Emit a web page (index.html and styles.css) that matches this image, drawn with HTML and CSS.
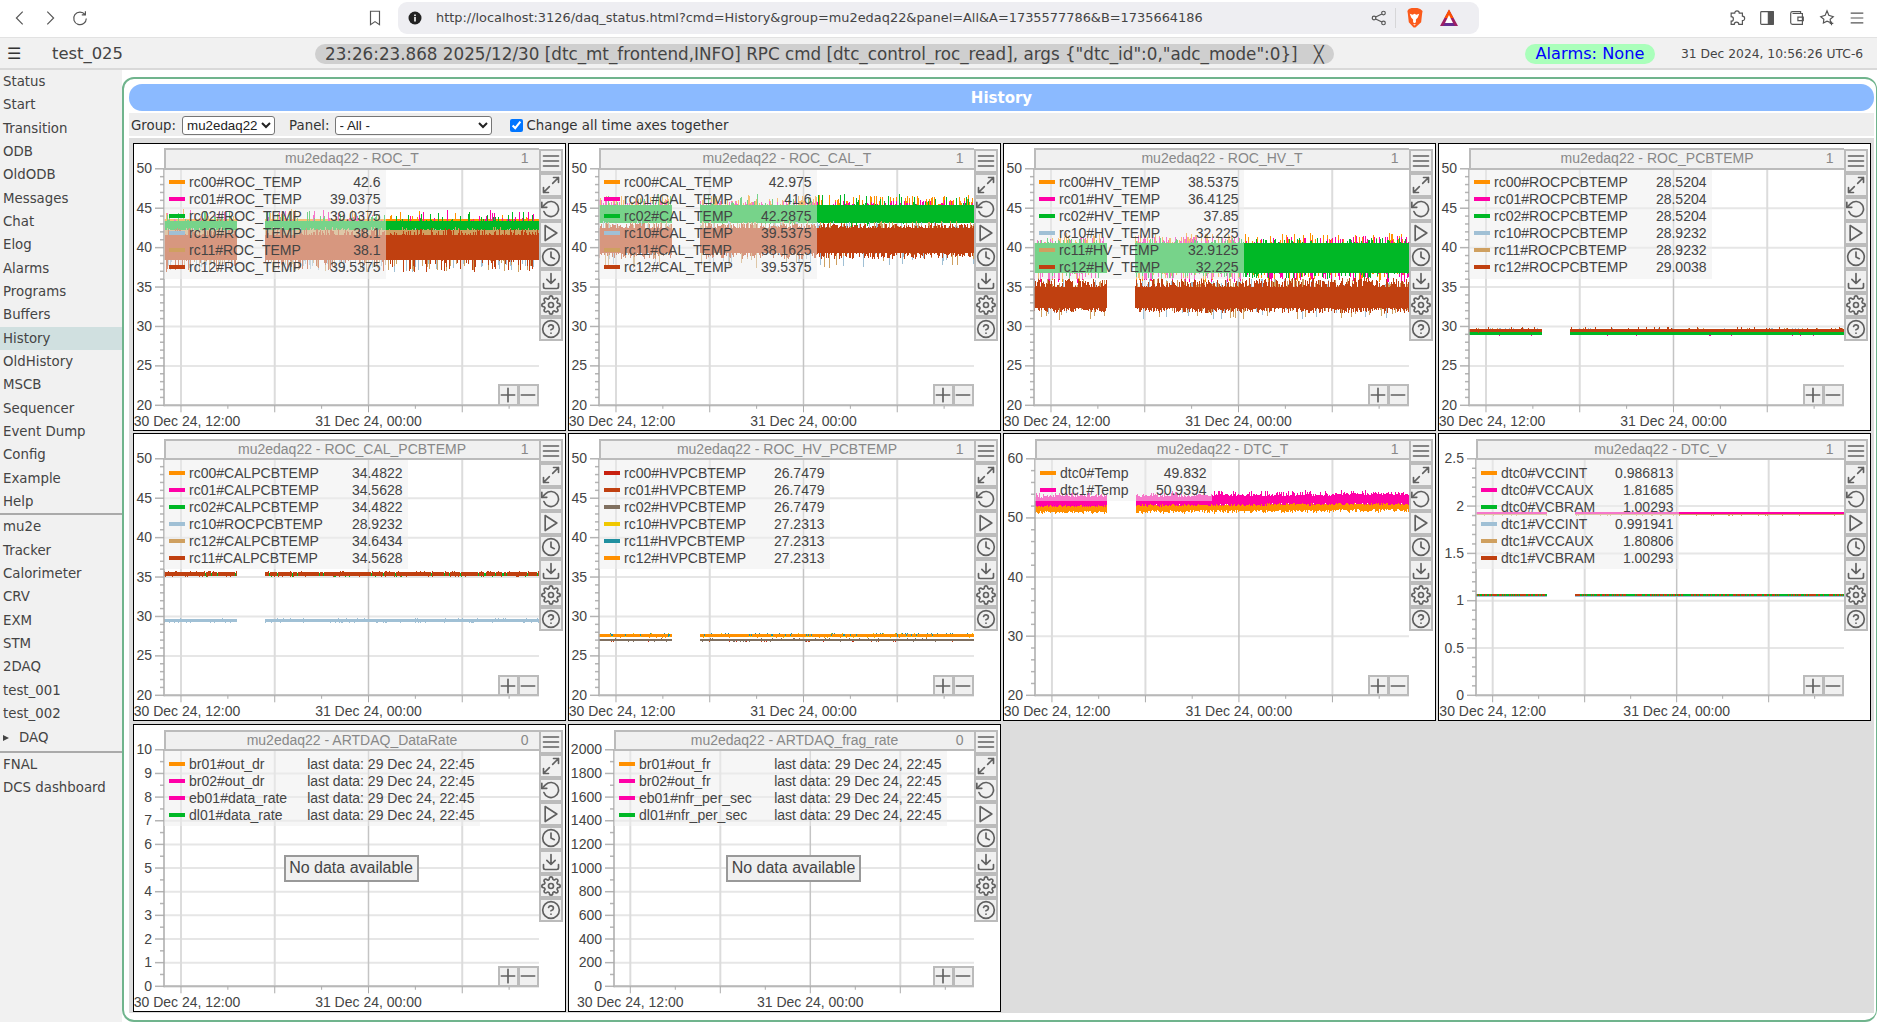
FILE: index.html
```html
<!DOCTYPE html>
<html lang="en">
<head>
<meta charset="utf-8">
<title>History</title>
<link rel="stylesheet" href="styles.css">
</head>
<body>
<div class="browser">
  <div class="nav">
    <svg class="bicon" viewBox="0 0 20 20"><path d="M13 3 6 10l7 7"/></svg>
    <svg class="bicon" viewBox="0 0 20 20"><path d="M7 3l7 7-7 7"/></svg>
    <svg class="bicon" viewBox="0 0 20 20"><path d="M15.600 6.200A7 7 0 1 0 17 10.500M16 2.500v4h-4"/></svg>
  </div>
  <svg class="bicon bookmark" viewBox="0 0 20 20"><path d="M5 2.500h10v15l-5-3.500-5 3.500z"/></svg>
  <div class="urlbar">
    <svg class="info" viewBox="0 0 16 16"><circle cx="8" cy="8" r="6.500" fill="#222"/><rect x="7.200" y="7" width="1.600" height="4.500" fill="#fff"/><rect x="7.200" y="4.500" width="1.600" height="1.600" fill="#fff"/></svg>
    <span class="url">http://localhost:3126/daq_status.html?cmd=History&amp;group=mu2edaq22&amp;panel=All&amp;A=1735577786&amp;B=1735664186</span>
    <svg class="bicon share" viewBox="0 0 20 20"><circle cx="15" cy="4.500" r="2"/><circle cx="15" cy="15.500" r="2"/><circle cx="4.500" cy="10" r="2"/><path d="M6.300 9 13.200 5.500M6.300 11l6.900 3.500"/></svg>
    <span class="urlsep"></span>
    <svg class="lion" viewBox="0 0 20 22"><path d="M4 1.500 7 .5h6l3 1 2.500 2-.5 3-1 9-6 5.500h-2L4 15.500l-1-9-.5-3z" fill="#fb5a1b"/><path d="M5 6.500 8 7.500l2-1 2 1 3-1-1.500 4-2 2v3l-1.500 1-1.500-1v-3l-2-2z" fill="#fff"/><path d="M8.500 17.500h3l-1.500 1.500z" fill="#fff"/></svg>
    <svg class="bat" viewBox="0 0 20 20"><polygon points="10,1.500 19,18 1,18" fill="#9e1f63"/><polygon points="10,1.500 14.500,10 5.500,10" fill="#ff5000"/><polygon points="10,7 14,15 6,15" fill="#fff"/><polygon points="6,15 14,15 16,18 4,18" fill="#662d91"/></svg>
  </div>
  <div class="tools">
    <svg class="bicon" viewBox="0 0 20 20"><path d="M7.500 4.500a2.500 2.500 0 0 1 5 0H16v3.500a2.500 2.500 0 0 1 0 5V17H12a2.500 2.500 0 0 0-5 0H3.500v-3.500a2.500 2.500 0 0 0 0-5V4.500z"/></svg>
    <svg class="bicon" viewBox="0 0 20 20"><rect x="3" y="3" width="14" height="14" rx="1"/><rect x="11.500" y="3" width="5.500" height="14" fill="#555"/></svg>
    <svg class="bicon" viewBox="0 0 20 20"><path d="M3 5a2 2 0 0 1 2-2h9v2M3 5v10a2 2 0 0 0 2 2h11V5H5M11 9h6v4h-6z"/></svg>
    <svg class="bicon" viewBox="0 0 20 20"><path d="M10 2l2 5 5 1.500-3.500 3 .5 3.500-4-1.500-4 2 .5-4-3.500-3L8 7zM15 14v4M13 16h4"/></svg>
    <svg class="bicon" viewBox="0 0 20 20"><path d="M3 4.500h14M3 10h14M3 15.500h14"/></svg>
  </div>
</div>

<header class="topbar">
  <span class="burger">☰</span>
  <span class="expt">test_025</span>
  <div class="msg">
    <span class="msgtext">23:26:23.868 2025/12/30 [dtc_mt_frontend,INFO] RPC cmd [dtc_control_roc_read], args {"dtc_id":0,"adc_mode":0}]</span>
    <span class="msgx">╳</span>
  </div>
  <div class="alarm">Alarms: None</div>
  <div class="clock">31 Dec 2024, 10:56:26 UTC-6</div>
</header>

<div class="layout">
  <nav class="side">
    <a class="item">Status</a>
    <a class="item">Start</a>
    <a class="item">Transition</a>
    <a class="item">ODB</a>
    <a class="item">OldODB</a>
    <a class="item">Messages</a>
    <a class="item">Chat</a>
    <a class="item">Elog</a>
    <a class="item">Alarms</a>
    <a class="item">Programs</a>
    <a class="item">Buffers</a>
    <a class="item active">History</a>
    <a class="item">OldHistory</a>
    <a class="item">MSCB</a>
    <a class="item">Sequencer</a>
    <a class="item">Event Dump</a>
    <a class="item">Config</a>
    <a class="item">Example</a>
    <a class="item">Help</a>
    <hr class="rule">
    <a class="item">mu2e</a>
    <a class="item">Tracker</a>
    <a class="item">Calorimeter</a>
    <a class="item">CRV</a>
    <a class="item">EXM</a>
    <a class="item">STM</a>
    <a class="item">2DAQ</a>
    <a class="item">test_001</a>
    <a class="item">test_002</a>
    <a class="item folder"><span class="tri"></span>DAQ</a>
    <hr class="rule rule2">
    <a class="item">FNAL</a>
    <a class="item">DCS dashboard</a>
  </nav>
  <main class="content">
    <section class="box">
      <div class="title">History</div>
      <div class="controls">
        <label class="ctl">Group:</label>
        <select class="sel selgroup"><option>mu2edaq22</option></select>
        <label class="ctl ctlpanel">Panel:</label>
        <select class="sel selpanel"><option>- All -</option></select>
        <input class="chk" type="checkbox" checked>
        <span class="ctl">Change all time axes together</span>
      </div>
      <div class="grid" id="grid"></div>
    </section>
  </main>
</div>
<script src="script.js"></script>
</body>
</html>
```

FILE: styles.css
```css
* { box-sizing: border-box; }
html, body { margin: 0; height: 100%; overflow: hidden; }
body { width: 1877px; height: 1022px; background: #fff; color: #444; font-family: "DejaVu Sans", sans-serif; font-size: 13.33px; display: flex; flex-direction: column; }

.browser { height: 38px; flex: none; display: flex; align-items: center; background: #fff; border-bottom: 1px solid #e2e2e2; padding: 0 0 2px 0; }
.nav { display: flex; gap: 12px; padding-left: 11px; width: 366px; }
.bicon { width: 18px; height: 18px; fill: none; stroke: #555; stroke-width: 1.300; display: block; flex: none; }
.bookmark { margin-right: 14px; }
.urlbar { width: 1081px; height: 32px; background: #eeeef2; border-radius: 9px; display: flex; align-items: center; padding: 0 0 0 9px; }
.info { width: 16px; height: 16px; flex: none; }
.url { margin-left: 13px; width: 931px; font-size: 12.920px; color: #444; white-space: nowrap; }
.share { margin-left: 3px; }
.urlsep { width: 1px; height: 20px; background: #d6d6d8; margin: 0 9px 0 7px; }
.lion { width: 19px; height: 22px; flex: none; }
.bat { width: 20px; height: 20px; margin-left: 15px; flex: none; }
.tools { display: flex; gap: 12px; margin-left: 249px; }

.topbar { height: 32px; flex: none; background: #f1f1f1; border-bottom: 2px solid #d9d9d9; display: flex; align-items: center; padding-top: 2px; }
.burger { width: 52px; padding-left: 7px; padding-bottom: 2px; font-size: 16px; color: #333; }
.expt { width: 263px; padding-bottom: 2px; font-size: 16.400px; color: #444; }
.msg { width: 1019px; height: 20px; background: #cfcfcf; border-radius: 10px; display: flex; align-items: center; padding-left: 10px; font-size: 16.750px; color: #444; white-space: nowrap; }
.msgtext { width: 989px; }
.msgx { font-size: 16px; }
.alarm { margin-left: 191px; width: 130px; height: 20px; background: #aaffbb; border-radius: 10px; color: #0000ff; font-size: 16.200px; text-align: center; line-height: 20px; }
.clock { margin-left: 26px; font-size: 12.300px; color: #444; white-space: nowrap; }

.layout { flex: 1; display: flex; min-height: 0; }
.side { width: 122px; flex: none; background: #f1f1f1; }
.item { display: block; height: 23.330px; line-height: 23.330px; padding-left: 3px; color: #444; white-space: nowrap; }
.active { background: #d0e0e0; }
.folder { display: flex; align-items: center; margin-top: 1px; }
.tri { width: 0; height: 0; border-left: 6px solid #444; border-top: 3.500px solid transparent; border-bottom: 3.500px solid transparent; margin-right: 10px; }
.rule { margin: 0; height: 2px; border: 0; background: #aaa; }
.rule2 { margin-top: 1px; }

.content { flex: 1; min-width: 0; padding-top: 7px; }
.box { height: 945px; border: 2px solid #70b48d; border-right-width: 1px; border-radius: 12px; padding: 5px 2px 0 5px; }
.title { height: 27px; line-height: 28px; background: #8bbaff; border-radius: 13px; color: #fff; font-weight: bold; font-size: 15px; text-align: center; }
.controls { height: 23px; margin-top: 2px; background: #eee; display: flex; align-items: center; padding: 2px 0 0 2px; }
.ctl { font-size: 13.330px; color: #333; white-space: nowrap; }
.sel { height: 19px; font-family: "Liberation Sans", sans-serif; font-size: 13.330px; color: #222; background: #fff; border: 1px solid #767676; border-radius: 3px; padding: 0; margin: 0; }
.selgroup { width: 93px; margin-left: 6px; }
.ctlpanel { margin-left: 14px; }
.selpanel { width: 157px; margin-left: 5px; }
.chk { width: 13px; height: 13px; margin: 0 4px 0 18px; }

.grid { margin-top: 2px; height: 875px; background: #ddd; padding: 4.500px 0 0 3.500px; display: grid; grid-template-columns: repeat(4, 433px); grid-auto-rows: 288px; gap: 2.800px 2px; align-content: start; }
.panel { position: relative; background: #fff; box-shadow: inset 0 0 0 1px #000; overflow: hidden; font-family: "Liberation Sans", sans-serif; font-size: 14px; }
.plot { position: absolute; left: 0; top: 0; width: 433px; height: 288px; }
.lbl { font-family: "Liberation Sans", sans-serif; font-size: 14px; fill: #444; }
.end { text-anchor: end; }
.mid { text-anchor: middle; }

.phead { position: absolute; top: 5.500px; right: 27px; height: 21.500px; background: #f0f0f0; border: 2px solid #bbb; border-right: 0; color: #888; text-align: center; line-height: 17.500px; }
.pnum { position: absolute; right: 10px; top: 0; }

.legend { position: absolute; top: 27px; padding: 4px 5px 3px 5px; background: rgba(238, 238, 238, 0.5); }
.lrow { display: flex; align-items: center; height: 17px; color: #444; white-space: nowrap; }
.swatch { width: 16px; height: 4px; margin-right: 4.500px; flex: none; }
.lname { flex: 1; }

.toolbar { position: absolute; left: 406px; top: 6px; width: 24px; display: flex; flex-direction: column; }
.tbtn { width: 24px; height: 24px; background: #f0f0f0; border: 2px solid #bbb; display: flex; align-items: center; justify-content: center; }
.ticon { width: 20px; height: 20px; flex: none; fill: none; stroke: #606060; stroke-width: 2; stroke-linecap: round; stroke-linejoin: round; }

.zoom { position: absolute; left: 365px; top: 241.500px; display: flex; }
.zbtn { width: 21px; height: 21.500px; background: #f0f0f0; border: 2px solid #bbb; display: flex; align-items: center; justify-content: center; }
.zbtn + .zbtn { margin-left: -1px; }

.nodata { position: absolute; top: 131px; width: 135px; height: 27px; background: #f0f0f0; border: 2px solid #999; font-size: 16px; color: #444; text-align: center; line-height: 22px; }
```

FILE: script.js
```js
var C = { o: '#ff9000', p: '#ff00a7', g: '#00b826', b: '#a0c0d5', t: '#cfa060', r: '#c04010', dr: '#c8200f', br: '#807060', y: '#f0c800', te: '#2090a0' };
var ICONS = {
  menu: '<path d="M3 6h18M3 12h18M3 18h18"/>',
  expand: '<path d="M15 3h6v6M9 21H3v-6M21 3l-7 7M3 21l7-7"/>',
  undo: '<path d="M1 4v6h6"/><path d="M3.510 15a9 9 0 1 0 2.130-9.360L1 10"/>',
  play: '<path d="M5 3l14 9-14 9z"/>',
  clock: '<circle cx="12" cy="12" r="10"/><path d="M12 6v6l4 2"/>',
  down: '<path d="M21 15v4a2 2 0 0 1-2 2H5a2 2 0 0 1-2-2v-4"/><path d="M7 10l5 5 5-5M12 15V3"/>',
  gear: '<circle cx="12" cy="12" r="3"/><path d="M19.400 15a1.650 1.650 0 0 0 .33 1.820l.06.06a2 2 0 0 1 0 2.830 2 2 0 0 1-2.830 0l-.06-.06a1.650 1.650 0 0 0-1.820-.33 1.650 1.650 0 0 0-1 1.510V21a2 2 0 0 1-2 2 2 2 0 0 1-2-2v-.09A1.650 1.650 0 0 0 9 19.400a1.650 1.650 0 0 0-1.820.33l-.06.06a2 2 0 0 1-2.830 0 2 2 0 0 1 0-2.830l.06-.06a1.650 1.650 0 0 0 .33-1.820 1.650 1.650 0 0 0-1.510-1H3a2 2 0 0 1-2-2 2 2 0 0 1 2-2h.09A1.650 1.650 0 0 0 4.600 9a1.650 1.650 0 0 0-.33-1.820l-.06-.06a2 2 0 0 1 0-2.830 2 2 0 0 1 2.830 0l.06.06a1.650 1.650 0 0 0 1.820.33H9a1.650 1.650 0 0 0 1-1.510V3a2 2 0 0 1 2-2 2 2 0 0 1 2 2v.09a1.650 1.650 0 0 0 1 1.510 1.650 1.650 0 0 0 1.820-.33l.06-.06a2 2 0 0 1 2.830 0 2 2 0 0 1 0 2.830l-.06.06a1.650 1.650 0 0 0-.33 1.820V9a1.650 1.650 0 0 0 1.510 1H21a2 2 0 0 1 2 2 2 2 0 0 1-2 2h-.09a1.650 1.650 0 0 0-1.510 1z"/>',
  help: '<circle cx="12" cy="12" r="10"/><path d="M9.090 9a3 3 0 0 1 5.830 1c0 2-3 3-3 3M12 17h.01"/>',
  plus: '<path d="M4 12h16M12 4v16"/>',
  minus: '<path d="M4 12h16"/>'
};
function icon(n) { return '<svg class="ticon" viewBox="0 0 24 24">' + ICONS[n] + '</svg>'; }

var ROC = ['rc00', 'rc01', 'rc02', 'rc10', 'rc11', 'rc12'];
var SIX = ['o', 'p', 'g', 'b', 't', 'r'];
function rows(names, suffix, vals, cols) {
  return names.map(function (n, i) { return [(cols || SIX)[i], n + suffix, vals[i]]; });
}
var LAST = 'last data: 29 Dec 24, 22:45';

/* band: colour, top, bottom, spike-up-to, up probability, spike-down-to, down probability, jitter, drift, skip probability */
var PANELS = [
  { t: 'ROC_T', n: 1, x0: 31, ax: [20, 50, 5, 1], lw: 222,
    rows: rows(ROC, '#ROC_TEMP', ['42.6', '39.0375', '39.0375', '38.1', '38.1', '39.5375']),
    bands: [['o', 76, 92, 66, .12, 92, 0], ['p', 78, 92, 67, .14, 92, 0], ['g', 78, 92, 68, .18, 97, .05],
      ['b', 92, 117, 85, .2, 129, .2], ['t', 87, 117, 84, .2, 129, .2], ['r', 92, 117, 85, .55, 129, .25]] },
  { t: 'ROC_CAL_T', n: 1, x0: 31, ax: [20, 50, 5, 1], lw: 218,
    rows: rows(ROC, '#CAL_TEMP', ['42.975', '41.6', '42.2875', '39.5375', '38.1625', '39.5375']),
    bands: [['o', 62, 80, 52, .4, 80, 0], ['p', 62, 80, 57, .35, 80, 0], ['g', 62, 80, 50, .15, 86, .06],
      ['b', 85, 110, 78, .25, 124, .1], ['t', 85, 110, 78, .35, 126, .1], ['r', 85, 110, 80, .75, 116, .6]] },
  { t: 'ROC_HV_T', n: 1, x0: 31, ax: [20, 50, 5, 1], lw: 210,
    rows: rows(ROC, '#HV_TEMP', ['38.5375', '36.4125', '37.85', '32.225', '32.9125', '32.225']),
    bands: [['o', 100, 130, 90, .28, 139, .2], ['p', 100, 130, 93, .35, 140, .28], ['g', 100, 130, 95, .28, 136, .18],
      ['b', 146, 165, 136, .3, 177, .1], ['t', 146, 165, 136, .35, 177, .1], ['r', 144, 165, 135, .8, 170, .85]] },
  { t: 'ROC_PCBTEMP', n: 1, x0: 31, ax: [20, 50, 5, 1], lw: 243,
    rows: rows(ROC, '#ROCPCBTEMP', ['28.5204', '28.5204', '28.5204', '28.9232', '28.9232', '29.0038']),
    bands: [['p', 189, 191, 189, 0, 193, .08, 0], ['g', 189, 192, 189, 0, 192, 0, 0], ['b', 186, 188, 185, .1, 189, .05, 0],
      ['t', 186, 188, 185, .1, 189, .05, 0], ['r', 185.500, 188.500, 183.500, .12, 189.500, .12, 0]] },
  { t: 'ROC_CAL_PCBTEMP', n: 1, x0: 31, ax: [20, 50, 5, 1], lw: 244,
    rows: [['o', 'rc00#CALPCBTEMP', '34.4822'], ['p', 'rc01#CALPCBTEMP', '34.5628'], ['g', 'rc02#CALPCBTEMP', '34.4822'],
      ['b', 'rc10#ROCPCBTEMP', '28.9232'], ['t', 'rc12#CALPCBTEMP', '34.6434'], ['r', 'rc11#CALPCBTEMP', '34.5628']],
    bands: [['g', 140, 143, 140, 0, 144, .1, 0], ['b', 186, 189, 185, .2, 190, .2, 0], ['r', 139, 143, 137.500, .2, 144, .2, 0, 0, .06]] },
  { t: 'ROC_HV_PCBTEMP', n: 1, x0: 31, ax: [20, 50, 5, 1], lw: 231,
    rows: rows(ROC, '#HVPCBTEMP', ['26.7479', '26.7479', '26.7479', '27.2313', '27.2313', '27.2313'], ['dr', 'r', 'br', 'y', 'te', 'o']),
    bands: [['dr', 206, 208, 206, 0, 209, .06, 0], ['r', 206, 208, 206, 0, 209, .06, 0], ['br', 206, 208, 205, .08, 209, .06, 0],
      ['y', 201, 204, 200, .1, 205, .05, 0], ['te', 200.500, 203, 200, .1, 204, .05, 0], ['o', 201, 204, 200.500, .1, 205, .1, 0, 0, .08]] },
  { t: 'DTC_T', n: 1, x0: 32, ax: [20, 60, 10, 2], lw: 177,
    rows: rows(['dtc0', 'dtc1'], '#Temp', ['49.832', '50.9394'], ['o', 'p']),
    bands: [['o', 71.500, 79, 68, .1, 81.500, .4, 1, -2], ['p', 63.500, 73, 59, .35, 74.500, .2, 1, -2.500]] },
  { t: 'DTC_V', n: 1, x0: 38, ax: [0, 2.500, .5, .1], lw: 203,
    rows: [['o', 'dtc0#VCCINT', '0.986813'], ['p', 'dtc0#VCCAUX', '1.81685'], ['g', 'dtc0#VCBRAM', '1.00293'],
      ['b', 'dtc1#VCCINT', '0.991941'], ['t', 'dtc1#VCCAUX', '1.80806'], ['r', 'dtc1#VCBRAM', '1.00293']],
    bands: [['t', 80.500, 82, 80.500, 0, 83, .2, 0], ['p', 79, 81, 79, 0, 81, 0, 0], ['b', 162, 164, 162, 0, 164, 0, 0],
      ['r', 161, 163, 161, 0, 163, 0, 0], ['g', 161, 163, 161, 0, 163, 0, 0, 0, .6]] },
  { t: 'ARTDAQ_DataRate', n: 0, x0: 31, ax: [0, 10, 1, .5], lw: 316, nodata: true,
    rows: [['o', 'br01#out_dr', LAST], ['p', 'br02#out_dr', LAST], ['p', 'eb01#data_rate', LAST], ['g', 'dl01#data_rate', LAST]], bands: [] },
  { t: 'ARTDAQ_frag_rate', n: 0, x0: 46, ax: [0, 2000, 200, 100], lw: 333, nodata: true,
    rows: [['o', 'br01#out_fr', LAST], ['p', 'br02#out_fr', LAST], ['p', 'eb01#nfr_per_sec', LAST], ['g', 'dl01#nfr_per_sec', LAST]], bands: [] }
];

var RIGHT = 406, TOP = 25.800, BOT = 262.300;

function rng(seed) {
  return function () {
    seed |= 0; seed = seed + 0x6D2B79F5 | 0;
    var t = Math.imul(seed ^ seed >>> 15, 1 | seed);
    t = t + Math.imul(t ^ t >>> 7, 61 | t) ^ t;
    return ((t ^ t >>> 14) >>> 0) / 4294967296;
  };
}

function svgFor(p, idx) {
  var s = '', x0 = p.x0, w = RIGHT - x0, a = p.ax;
  var yOf = function (v) { return BOT - (v - a[0]) * (BOT - TOP) / (a[1] - a[0]); };
  var cnt = Math.round((a[1] - a[0]) / a[2]);
  var minorPer = Math.round(a[2] / a[3]);
  var i, k, y, v;
  /* grid */
  for (i = 0; i <= cnt; i++) {
    y = yOf(a[0] + i * a[2]);
    s += '<line x1="' + x0 + '" x2="' + RIGHT + '" y1="' + y + '" y2="' + y + '" stroke="#e6e6e6" stroke-width="2"/>';
  }
  var tick1 = x0 + 0.0453 * w, per = 0.25 * w;
  for (i = 0; i < 4; i++) {
    var gx = tick1 + i * per;
    s += '<line x1="' + gx + '" x2="' + gx + '" y1="26" y2="' + BOT + '" stroke="' + (i === 2 ? '#c4c4c4' : '#dcdcdc') + '" stroke-width="' + (i === 2 ? 1.500 : 2) + '"/>';
  }
  /* traces */
  var r = rng(1000 + idx * 77);
  p.bands.forEach(function (b) {
    var d = '';
    for (var c = 0; c < w; c++) {
      var f = c / w;
      if (f > 0.192 && f < 0.268) continue;
      if (b[9] && r() < b[9]) continue;
      var drift = (b[8] || 0) * f;
      var j = b[7] ? Math.round((r() - .5) * 2 * b[7]) : 0;
      var top = b[1] + j + drift, bot = b[2] + j + drift;
      if (r() < b[4]) top = b[3] + drift + (top - b[3] - drift) * r();
      if (r() < b[6]) bot = bot + (b[5] + drift - bot) * r();
      d += 'M' + (x0 + c + .5) + ' ' + top.toFixed(1) + 'V' + bot.toFixed(1);
    }
    s += '<path d="' + d + '" stroke="' + C[b[0]] + '" stroke-width="1" fill="none" shape-rendering="crispEdges"/>';
  });
  /* axes and ticks */
  for (i = 0; i <= cnt; i++) {
    v = a[0] + i * a[2];
    y = yOf(v);
    s += '<line x1="' + (x0 - 9) + '" x2="' + x0 + '" y1="' + y + '" y2="' + y + '" stroke="#b4b4b4" stroke-width="1.500"/>';
    var label = String(Math.round(v * 100) / 100);
    s += '<text class="lbl end" x="' + (x0 - 12) + '" y="' + (y + 4.500) + '">' + label + '</text>';
    if (i < cnt) for (k = 1; k < minorPer; k++) {
      var my = yOf(v + k * a[3]);
      s += '<line x1="' + (x0 - 4) + '" x2="' + x0 + '" y1="' + my + '" y2="' + my + '" stroke="#b4b4b4" stroke-width="1.500"/>';
    }
  }
  s += '<line x1="' + x0 + '" x2="' + x0 + '" y1="26" y2="' + (BOT + 1) + '" stroke="#aaa" stroke-width="1.500"/>';
  s += '<line x1="' + x0 + '" x2="' + RIGHT + '" y1="' + BOT + '" y2="' + BOT + '" stroke="#b8b8b8" stroke-width="2"/>';
  for (i = 0; i < 8; i++) {
    var tx = tick1 + i * per / 2;
    if (tx > RIGHT) break;
    s += '<line x1="' + tx + '" x2="' + tx + '" y1="' + BOT + '" y2="' + (BOT + (i % 2 ? 3.500 : 7)) + '" stroke="#aaa" stroke-width="1"/>';
  }
  var c1 = Math.max(54, tick1), c2 = tick1 + 2 * per;
  s += '<text class="lbl mid" x="' + c1 + '" y="283.300">30 Dec 24, 12:00</text>';
  s += '<text class="lbl mid" x="' + c2 + '" y="283.300">31 Dec 24, 00:00</text>';
  return '<svg class="plot" viewBox="0 0 433 288">' + s + '</svg>';
}

function panelHtml(p, idx) {
  var h = svgFor(p, idx);
  h += '<div class="phead" style="left:' + p.x0 + 'px">mu2edaq22 - ' + p.t + '<span class="pnum">' + p.n + '</span></div>';
  h += '<div class="legend" style="left:' + p.x0 + 'px;width:' + p.lw + 'px">';
  p.rows.forEach(function (r) {
    h += '<div class="lrow"><span class="swatch" style="background:' + C[r[0]] + '"></span><span class="lname">' + r[1] + '</span><span>' + r[2] + '</span></div>';
  });
  h += '</div>';
  h += '<div class="toolbar">' + ['menu', 'expand', 'undo', 'play', 'clock', 'down', 'gear', 'help'].map(function (n) {
    return '<div class="tbtn">' + icon(n) + '</div>';
  }).join('') + '</div>';
  h += '<div class="zoom"><div class="zbtn">' + icon('plus') + '</div><div class="zbtn">' + icon('minus') + '</div></div>';
  if (p.nodata) {
    h += '<div class="nodata" style="left:' + ((p.x0 + RIGHT) / 2 - 67.500) + 'px">No data available</div>';
  }
  return '<article class="panel">' + h + '</article>';
}

document.getElementById('grid').innerHTML = PANELS.map(panelHtml).join('');
```
